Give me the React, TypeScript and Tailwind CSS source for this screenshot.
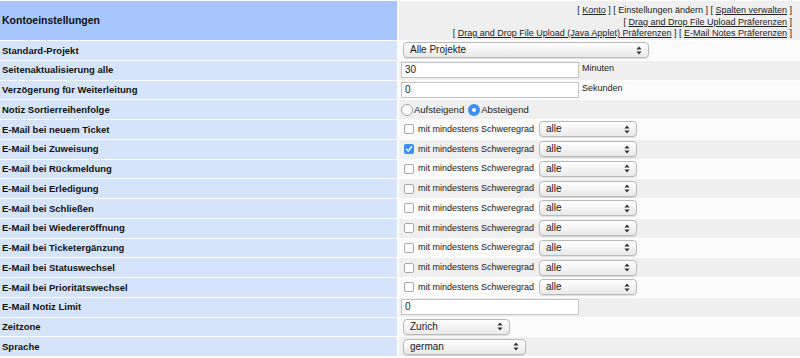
import React from "react";

const font = { fontFamily: '"Liberation Sans", Arial, sans-serif' };

function Arrows() {
  return (
    <svg width="6" height="9" viewBox="0 0 6 9" className="shrink-0">
      <path d="M3 0.5 L5.6 3.6 L0.4 3.6 Z" fill="#333" />
      <path d="M3 8.5 L5.6 5.4 L0.4 5.4 Z" fill="#333" />
    </svg>
  );
}

function Select({ text, w }: { text: string; w: string }) {
  return (
    <div
      className={`${w} h-[16px] flex items-center justify-between pl-[6px] pr-[6px] rounded-[4px] border border-[#b9b9b9] bg-gradient-to-b from-white to-[#e9e9e9] shadow-[0_1px_1px_rgba(0,0,0,0.12)] text-[10px] text-[#1a1a1a]`}
    >
      <span className="leading-none">{text}</span>
      <Arrows />
    </div>
  );
}

function TextInput({ value }: { value: string }) {
  return (
    <div className="w-[178px] h-[16px] flex items-center pl-[3px] bg-white border border-[#c4c4c4] text-[10px] text-[#1a1a1a] leading-none">
      {value}
    </div>
  );
}

function Checkbox({ checked }: { checked?: boolean }) {
  if (checked)
    return (
      <div className="w-[10px] h-[10px] rounded-[2px] bg-[#3d8ef7] flex items-center justify-center shrink-0">
        <svg width="8" height="8" viewBox="0 0 8 8">
          <path d="M1.5 4.2 L3.3 6 L6.6 1.8" stroke="white" strokeWidth="1.4" fill="none" strokeLinecap="round" strokeLinejoin="round" />
        </svg>
      </div>
    );
  return <div className="w-[10px] h-[10px] rounded-[2px] bg-white border border-[#a8a8a8] shrink-0" />;
}

function Radio({ checked }: { checked?: boolean }) {
  if (checked)
    return (
      <div className="w-[12px] h-[12px] rounded-full bg-[#3d8ef7] flex items-center justify-center shrink-0">
        <div className="w-[4px] h-[4px] rounded-full bg-white" />
      </div>
    );
  return <div className="w-[12px] h-[12px] rounded-full bg-white border border-[#a0a0a0] shrink-0" />;
}

function EmailCell({ checked }: { checked?: boolean }) {
  return (
    <div className="flex items-center pl-[3px]">
      <Checkbox checked={checked} />
      <span className="ml-[4px] text-[9px] text-[#1a1a1a] leading-none">mit mindestens Schweregrad</span>
      <div className="ml-[5px]">
        <Select text="alle" w="w-[98px]" />
      </div>
    </div>
  );
}

type Row = { label: string; content: React.ReactNode };

const rows: Row[] = [
  { label: "Standard-Projekt", content: <div className="pl-[2px]"><Select text="Alle Projekte" w="w-[246px]" /></div> },
  {
    label: "Seitenaktualisierung alle",
    content: (
      <div className="flex items-center">
        <TextInput value="30" />
        <span className="ml-[3px] -mt-[3px] text-[9px] text-[#1a1a1a] leading-none">Minuten</span>
      </div>
    ),
  },
  {
    label: "Verzögerung für Weiterleitung",
    content: (
      <div className="flex items-center">
        <TextInput value="0" />
        <span className="ml-[3px] -mt-[3px] text-[9px] text-[#1a1a1a] leading-none">Sekunden</span>
      </div>
    ),
  },
  {
    label: "Notiz Sortierreihenfolge",
    content: (
      <div className="flex items-center text-[9.5px] text-[#1a1a1a] leading-none">
        <Radio />
        <span className="ml-px">Aufsteigend</span>
        <div className="ml-[4px]"><Radio checked /></div>
        <span className="ml-px">Absteigend</span>
      </div>
    ),
  },
  { label: "E-Mail bei neuem Ticket", content: <EmailCell /> },
  { label: "E-Mail bei Zuweisung", content: <EmailCell checked /> },
  { label: "E-Mail bei Rückmeldung", content: <EmailCell /> },
  { label: "E-Mail bei Erledigung", content: <EmailCell /> },
  { label: "E-Mail bei Schließen", content: <EmailCell /> },
  { label: "E-Mail bei Wiedereröffnung", content: <EmailCell /> },
  { label: "E-Mail bei Ticketergänzung", content: <EmailCell /> },
  { label: "E-Mail bei Statuswechsel", content: <EmailCell /> },
  { label: "E-Mail bei Prioritätswechsel", content: <EmailCell /> },
  { label: "E-Mail Notiz Limit", content: <TextInput value="0" /> },
  { label: "Zeitzone", content: <div className="pl-[2px]"><Select text="Zurich" w="w-[107px]" /></div> },
  { label: "Sprache", content: <div className="pl-[2px]"><Select text="german" w="w-[123px]" /></div> },
];

function L({ children }: { children: React.ReactNode }) {
  return <span className="underline text-[#222]">{children}</span>;
}

export default function App() {
  return (
    <div className="w-[800px] h-[358px] bg-white overflow-hidden pt-px" style={font}>
      <div className="grid grid-cols-[397px_1fr] grid-rows-[39px_repeat(16,18.75px)] gap-x-[2px] gap-y-px">
        <div className="bg-[#a7c6fd] flex items-center pl-[2px] text-[10.5px] font-bold text-[#111]">
          Kontoeinstellungen
        </div>
        <div className="bg-[#efefef] flex flex-col items-end pr-[8px] pt-[4px] text-[9px] leading-[11.5px] text-[#1a1a1a]">
          <div>
            [ <L>Konto</L> ] [ Einstellungen ändern ] [ <L>Spalten verwalten</L> ]
          </div>
          <div>
            [ <L>Drag and Drop File Upload Präferenzen</L> ]
          </div>
          <div>
            [ <L>Drag and Drop File Upload (Java Applet) Präferenzen</L> ] [ <L>E-Mail Notes Präferenzen</L> ]
          </div>
        </div>
        {rows.map((r, i) => (
          <React.Fragment key={r.label}>
            <div className="bg-[#d6e4fb] flex items-center pl-[2px] text-[9.5px] font-bold text-[#111] leading-none">
              {r.label}
            </div>
            <div className={`${i % 2 === 0 ? "bg-[#fbfbfb]" : "bg-[#efefef]"} flex items-center pl-[2px]`}>
              {r.content}
            </div>
          </React.Fragment>
        ))}
      </div>
    </div>
  );
}
